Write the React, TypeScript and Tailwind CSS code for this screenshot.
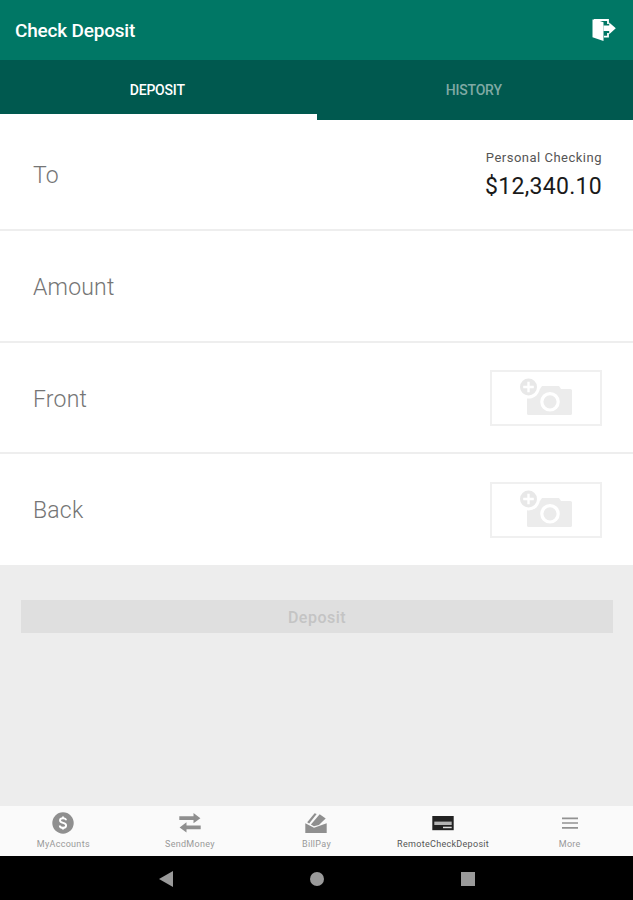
import { useState } from 'react'
import type { ReactNode } from 'react'

const tabs = ['Deposit', 'History']

function ExitIcon() {
  return (
    <svg width="24" height="24" viewBox="0 0 24 24" fill="none">
      <path d="M2 2h14v4M16 15v3.600h-4" stroke="#fff" strokeWidth="1.800" />
      <path d="M.5 1.500h3l8 2.800v18.700L.5 19.200z" fill="#fff" />
      <path d="M11.500 7.500h5.700V4.400l6.600 5.900-6.600 5.900v-3.100h-5.700z" fill="#fff" />
    </svg>
  )
}

function CameraIcon() {
  return (
    <svg width="54" height="40" viewBox="0 0 54 40">
      <path d="M8 11h13l2-3h17l2 3h9.500a1.500 1.500 0 0 1 1.500 1.500v23a1.500 1.500 0 0 1-1.500 1.500h-42A1.500 1.500 0 0 1 8 35.500z" fill="#ececec" />
      <circle cx="9.500" cy="9" r="11.500" fill="#fff" />
      <circle cx="9.500" cy="9" r="8.500" fill="#e8e8e8" />
      <path d="M9.500 3.700v10.600M4.200 9h10.600" stroke="#fff" strokeWidth="2.400" />
      <circle cx="31" cy="23.800" r="8.200" fill="#ebebeb" stroke="#fff" strokeWidth="3.200" />
    </svg>
  )
}

function DollarIcon() {
  return (
    <svg width="22" height="22" viewBox="0 0 22 22" fill="none">
      <circle cx="11" cy="11" r="10.700" fill="#8f8f8f" />
      <path
        d="M14 8.300C14 6.900 12.700 6.200 11 6.200S8 7 8 8.500c0 3.200 6.100 1.700 6.100 4.900 0 1.600-1.400 2.400-3.100 2.400s-3.200-.8-3.200-2.400M11 4.400v2M11 15.600v2"
        stroke="#fff"
        strokeWidth="1.900"
      />
    </svg>
  )
}

function TransferIcon() {
  return (
    <svg width="22" height="22" viewBox="0 0 22 22" fill="#8f8f8f">
      <path d="M.3 4.300h14.200V1l6.900 5.200-6.900 5.100V8.100H.3zM21.700 13.500H7.500v-3.300L.6 15.400l6.900 5.100v-3.200h14.200z" />
    </svg>
  )
}

function BillIcon() {
  return (
    <svg width="22" height="22" viewBox="0 0 22 22" fill="#8f8f8f">
      <path d="M.3 11.200l8.700 4.600 12.700-4.600v9.700H.3z" />
      <path d="M2.200 10.300L9.600 1.200l2.100.7-7.500 9.700z" />
      <path d="M5.900 12.600l8.800-10.400 6 4.400-6.800 6.300-5 1.300z" />
    </svg>
  )
}

function CheckIcon() {
  return (
    <svg width="22" height="22" viewBox="0 0 22 22">
      <path d="M.3 4h21.400v14.200H.3z" fill="#222" />
      <path d="M2.300 9.600h17.400v3.400H2.300z" fill="#b5b5b5" />
      <path d="M11 14.700h8.700v1.500H11z" fill="#ddd" />
    </svg>
  )
}

function MenuIcon() {
  return (
    <svg width="22" height="22" viewBox="0 0 22 22" stroke="#929292" strokeWidth="1.700">
      <path d="M3 6.300h16M3 11h16M3 15.900h16" />
    </svg>
  )
}

const navItems = [
  { label: 'MyAccounts', icon: <DollarIcon /> },
  { label: 'SendMoney', icon: <TransferIcon /> },
  { label: 'BillPay', icon: <BillIcon /> },
  { label: 'RemoteCheckDeposit', icon: <CheckIcon />, active: true },
  { label: 'More', icon: <MenuIcon /> },
]

function Row({ label, className = '', children }: { label: string; className?: string; children?: ReactNode }) {
  return (
    <div
      className={`flex items-center justify-between pl-[33px] pr-[31px] bg-white border-b-2 border-[#eeeeee] last:border-white ${className}`}
    >
      <span className="pt-0.5 text-[23px] leading-none font-light tracking-[0.2px] text-[#757575]">{label}</span>
      {children}
    </div>
  )
}

function PhotoButton({ label }: { label: string }) {
  return (
    <button
      aria-label={label}
      className="flex items-center justify-center w-[112px] h-14 border-2 border-[#f0f0f0] bg-white"
    >
      <CameraIcon />
    </button>
  )
}

export default function App() {
  const [tab, setTab] = useState('Deposit')

  return (
    <div className="h-[900px] w-full flex flex-col overflow-hidden bg-[#ededed] font-[Roboto,sans-serif]">
      <header className="h-[60px] shrink-0 flex items-center justify-between pl-[15px] pr-[17px] bg-[#007765]">
        <h1 className="pt-0.5 text-[19px] font-medium tracking-[-0.2px] text-white">Check Deposit</h1>
        <button aria-label="Log out">
          <ExitIcon />
        </button>
      </header>

      <div className="h-[60px] shrink-0 flex bg-[#00594f]">
        {tabs.map((t) => (
          <button
            key={t}
            onClick={() => setTab(t)}
            className={`flex-1 border-b-[6px] pt-[7px] pr-0.5 text-[14px] font-medium tracking-[-0.2px] uppercase ${
              t === tab ? 'border-white text-white' : 'border-transparent text-[#7fa9a4]'
            }`}
          >
            {t}
          </button>
        ))}
      </div>

      <main className="flex-1 flex flex-col">
        <div className="h-[445px] grid grid-rows-4">
          <Row label="To">
            <div className="pt-px text-right">
              <div className="text-[13px] leading-4 tracking-[0.5px] text-[#555]">Personal Checking</div>
              <div className="mt-[7px] text-[23px] leading-7 tracking-[0.3px] text-[#1a1a1a]">$12,340.10</div>
            </div>
          </Row>
          <Row label="Amount" className="pt-px" />
          <Row label="Front" className="pt-0.5">
            <PhotoButton label="Add front photo" />
          </Row>
          <Row label="Back" className="pt-[3px]">
            <PhotoButton label="Add back photo" />
          </Row>
        </div>
        <button
          disabled
          className="mt-[35px] ml-[21px] mr-5 h-[33px] pt-0.5 bg-[#dfdfdf] text-[16px] font-medium tracking-[0.5px] text-[#c4c4c4]"
        >
          Deposit
        </button>
      </main>

      <nav className="h-[50px] shrink-0 grid grid-cols-5 bg-[#fafafa]">
        {navItems.map((item) => (
          <button key={item.label} className="flex flex-col items-center pt-1.5">
            {item.icon}
            <span
              className={`mt-1 text-[9px] leading-3 tracking-[0.3px] ${
                item.active ? 'text-[#555]' : 'text-[#999]'
              }`}
            >
              {item.label}
            </span>
          </button>
        ))}
      </nav>

      <div className="h-11 shrink-0 flex items-center justify-center gap-[137px] pt-px bg-black">
        <svg width="14" height="16" viewBox="0 0 14 16" fill="#9a9a9a">
          <path d="M14 0v16L0 8z" />
        </svg>
        <div className="size-3.5 rounded-full bg-[#9a9a9a]" />
        <div className="size-3.5 bg-[#9a9a9a]" />
      </div>
    </div>
  )
}
